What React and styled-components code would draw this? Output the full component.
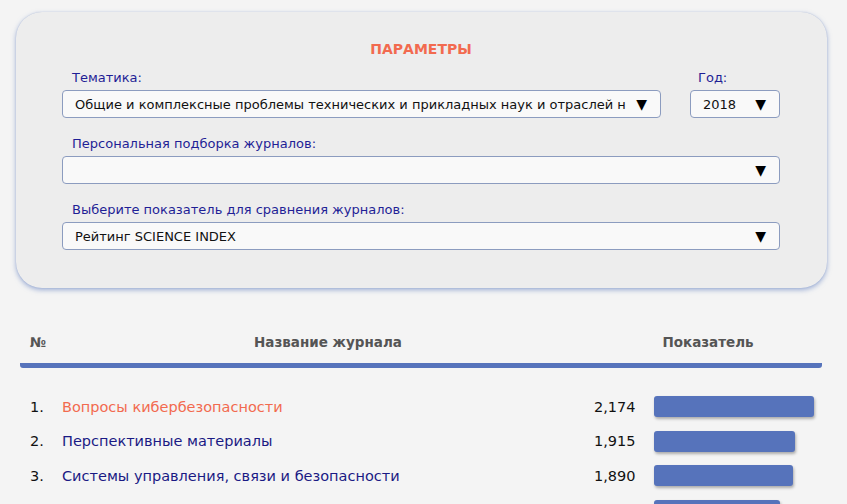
import React from 'react';
import styled, { createGlobalStyle } from 'styled-components';

const GlobalStyle = createGlobalStyle`
  body {
    margin: 0;
    background: #f4f4f4;
    font-family: "DejaVu Sans", Verdana, sans-serif;
  }
`;

const Page = styled.div`
  padding: 12px 20px 0 16px;
`;

const Panel = styled.div`
  background: #ededed;
  border-radius: 26px;
  box-shadow: 0 2px 5px rgba(86, 116, 187, 0.55), 0 0 1px rgba(86, 116, 187, 0.4);
  padding: 28px 47px 38px 46px;
`;

const PanelTitle = styled.div`
  text-align: center;
  color: #f26a4f;
  font-weight: bold;
  font-size: 14px;
  line-height: 18px;
  margin-bottom: 11px;
`;

const Row = styled.div`
  display: flex;
  gap: 29px;
  margin-bottom: ${(p) => p.gap || 0}px;
`;

const Field = styled.div`
  display: flex;
  flex-direction: column;
  gap: 3px;
  min-width: 0;
  flex: ${(p) => (p.width ? `0 0 ${p.width}px` : '1')};
  margin-bottom: ${(p) => p.gap || 0}px;
`;

const Label = styled.div`
  color: #1f1f96;
  font-size: 13px;
  line-height: 18px;
  padding-left: ${(p) => p.indent || 10}px;
`;

const Select = styled.div`
  height: 26px;
  border: 1px solid #8c9cbf;
  border-radius: 4px;
  background: #f9f9f9;
  display: flex;
  align-items: center;
  padding: 0 13px 0 12px;
  font-size: 13px;
  color: #111;
  gap: 8px;
`;

const SelectText = styled.span`
  flex: 1;
  min-width: 0;
  white-space: nowrap;
  overflow: hidden;
`;

const Arrow = styled.span`
  font-size: 14px;
  color: #000;
`;

const Table = styled.div`
  margin: 45px 5px 0 4px;
`;

const Grid = styled.div`
  display: grid;
  grid-template-columns: 42px 532px 41px 1fr;
  align-items: center;
`;

const Header = styled(Grid)`
  color: #555;
  font-weight: bold;
  font-size: 13.5px;
  line-height: 18px;
  padding-bottom: 12px;
  border-bottom: 5px solid #5673bb;
  border-radius: 0 0 3px 3px;
`;

const HeadCell = styled.div`
  text-align: ${(p) => p.align || 'left'};
  padding-left: ${(p) => p.pad || 0}px;
  grid-column: ${(p) => p.span || 'auto'};
`;

const Rows = styled.div`
  padding-top: 28px;
  display: flex;
  flex-direction: column;
  gap: 13.5px;
`;

const Num = styled.div`
  padding-left: 10px;
  font-size: 14.5px;
  color: #111;
`;

const Name = styled.a`
  font-size: 14.5px;
  color: ${(p) => (p.$active ? '#f26a4f' : '#1a1a84')};
  text-decoration: none;
`;

const Value = styled.div`
  text-align: right;
  font-size: 14.5px;
  color: #111;
`;

const BarCell = styled.div`
  padding-left: 19px;
`;

const Bar = styled.div`
  height: 21px;
  background: #5673bb;
  border-radius: 3px;
  box-shadow: 1px 2px 3px rgba(0, 0, 0, 0.3);
`;

const journals = [
  { name: 'Вопросы кибербезопасности', value: 2.174 },
  { name: 'Перспективные материалы', value: 1.915 },
  { name: 'Системы управления, связи и безопасности', value: 1.89 },
  { name: 'Информационные технологии', value: 1.712 },
];

const max = 2.174;

export default function App() {
  return (
    <Page>
      <GlobalStyle />
      <Panel>
        <PanelTitle>ПАРАМЕТРЫ</PanelTitle>
        <Row gap={17}>
          <Field>
            <Label>Тематика:</Label>
            <Select>
              <SelectText>Общие и комплексные проблемы технических и прикладных наук и отраслей н</SelectText>
              <Arrow>▼</Arrow>
            </Select>
          </Field>
          <Field width={90}>
            <Label indent={8}>Год:</Label>
            <Select>
              <SelectText>2018</SelectText>
              <Arrow>▼</Arrow>
            </Select>
          </Field>
        </Row>
        <Field gap={17}>
          <Label>Персональная подборка журналов:</Label>
          <Select>
            <SelectText></SelectText>
            <Arrow>▼</Arrow>
          </Select>
        </Field>
        <Field>
          <Label>Выберите показатель для сравнения журналов:</Label>
          <Select>
            <SelectText>Рейтинг SCIENCE INDEX</SelectText>
            <Arrow>▼</Arrow>
          </Select>
        </Field>
      </Panel>
      <Table>
        <Header>
          <HeadCell pad={10}>№</HeadCell>
          <HeadCell align="center">Название журнала</HeadCell>
          <HeadCell align="center" span="3 / 5">Показатель</HeadCell>
        </Header>
        <Rows>
          {journals.map((j, i) => (
            <Grid key={j.name}>
              <Num>{i + 1}.</Num>
              <Name href="#" $active={i === 0}>{j.name}</Name>
              <Value>{j.value.toFixed(3).replace('.', ',')}</Value>
              <BarCell>
                <Bar style={{ width: Math.round((j.value / max) * 160) }} />
              </BarCell>
            </Grid>
          ))}
        </Rows>
      </Table>
    </Page>
  );
}
